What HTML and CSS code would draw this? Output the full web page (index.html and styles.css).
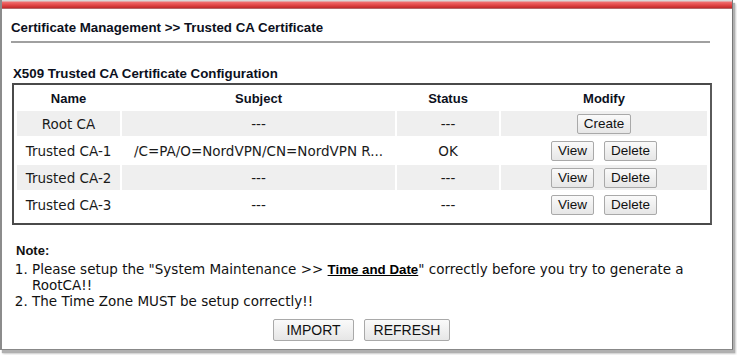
FILE: index.html
```html
<!DOCTYPE html>
<html lang="en">
<head>
  <meta charset="UTF-8">
  <title>Trusted CA Certificate</title>
  <link rel="stylesheet" href="styles.css">
</head>
<body>
  <div class="ventana">
    <div class="barra-roja"></div>
    <div class="contenido">
      <h1 class="titulo">Certificate Management &gt;&gt; Trusted CA Certificate</h1>

      <h2 class="subtitulo">X509 Trusted CA Certificate Configuration</h2>
      <div class="caja">
        <table class="tabla">
          <thead>
            <tr>
              <th class="c-nombre">Name</th>
              <th class="c-sujeto">Subject</th>
              <th class="c-estado">Status</th>
              <th class="c-modif">Modify</th>
            </tr>
          </thead>
          <tbody>
            <tr class="gris">
              <td>Root CA</td>
              <td>---</td>
              <td>---</td>
              <td><button class="boton">Create</button></td>
            </tr>
            <tr>
              <td>Trusted CA-1</td>
              <td>/C=PA/O=NordVPN/CN=NordVPN R...</td>
              <td>OK</td>
              <td><button class="boton">View</button><button class="boton">Delete</button></td>
            </tr>
            <tr class="gris">
              <td>Trusted CA-2</td>
              <td>---</td>
              <td>---</td>
              <td><button class="boton">View</button><button class="boton">Delete</button></td>
            </tr>
            <tr>
              <td>Trusted CA-3</td>
              <td>---</td>
              <td>---</td>
              <td><button class="boton">View</button><button class="boton">Delete</button></td>
            </tr>
          </tbody>
        </table>
      </div>

      <div class="nota">
        <div class="nota-titulo">Note:</div>
        <ol class="lista">
          <li>Please setup the "System Maintenance &gt;&gt; <a href="#">Time and Date</a>" correctly before you try to generate a RootCA!!</li>
          <li>The Time Zone MUST be setup correctly!!</li>
        </ol>
      </div>

      <div class="acciones">
        <button class="boton grande importar">IMPORT</button>
        <button class="boton grande refrescar">REFRESH</button>
      </div>
    </div>
  </div>
</body>
</html>
```

FILE: styles.css
```css
* {
  margin: 0;
  padding: 0;
  box-sizing: border-box;
}

html, body {
  width: 737px;
  height: 355px;
  overflow: hidden;
  background: white;
  font-family: "Liberation Sans", Arial, sans-serif;
  color: #000;
}

.ventana {
  width: 733px;
  height: 350px;
  border-left: 2px solid #8c8c8c;
  border-right: 1px solid #777;
  border-bottom: 1px solid #888;
  box-shadow: 2px 3px 1px #b0b0b0, 3px 4px 2px #d0d0d0;
  background: white;
}

.barra-roja {
  height: 9px;
  background: linear-gradient(#d9d9d9 0, #d9d9d9 1px, #f07070 2px, #e24848 5px, #c02a2a 8px, #a8a8a8 9px);
}

.contenido {
  padding: 0 22px 0 9px;
}

.titulo {
  font-size: 13.3px;
  font-weight: bold;
  color: #0c1020;
  padding: 11px 0 6px 0;
  border-bottom: 2px solid #a0a0a0;
}

.subtitulo {
  font-size: 13.3px;
  font-weight: bold;
  color: #0c1020;
  margin: 23px 0 2px 2px;
}

.caja {
  margin-left: 1px;
  width: 700px;
  border: 2px solid #4a4a4a;
  border-right-color: #5a5a5a;
  padding: 0 1px 4px 1px;
}

.tabla {
  width: 100%;
  border-collapse: separate;
  border-spacing: 2px 2px;
  font-family: "DejaVu Sans", Verdana, sans-serif;
  font-size: 13.5px;
  color: #1a1a1a;
}

.tabla th {
  font-family: "Liberation Sans", Arial, sans-serif;
  font-size: 13px;
  font-weight: bold;
  color: #0c1020;
  height: 22px;
  padding-top: 1px;
}

.c-nombre { width: 103px; }
.c-sujeto { width: 273px; }
.c-estado { width: 102px; }

.tabla td {
  height: 25px;
  text-align: center;
  white-space: nowrap;
}

.gris td {
  background: #efefef;
}

.boton {
  font-family: "Liberation Sans", Arial, sans-serif;
  font-size: 13.5px;
  color: #111;
  height: 20px;
  padding: 0 6px;
  background: linear-gradient(#fafafa, #e6e6e6);
  border: 1px solid #a9a9a9;
  border-radius: 2px;
  margin: 0 5px;
  vertical-align: middle;
  cursor: pointer;
}

.nota {
  margin: 18px 0 0 5px;
  font-family: "DejaVu Sans", Verdana, sans-serif;
  font-size: 13.5px;
  color: #111;
  line-height: 16px;
}

.nota-titulo {
  font-family: "Liberation Sans", Arial, sans-serif;
  font-weight: bold;
  font-size: 13px;
  line-height: 16px;
  margin-bottom: 2px;
}

.lista {
  padding-left: 16px;
}

.lista li {
  line-height: 16px;
}

.lista a {
  color: #000;
  font-weight: bold;
  font-family: "Liberation Sans", Arial, sans-serif;
  font-size: 13.3px;
  line-height: 1;
  text-decoration: underline;
}

.acciones {
  display: flex;
  justify-content: center;
  gap: 10px;
  margin-top: 10px;
  padding-left: 2px;
}

.grande {
  height: 22px;
  font-size: 14px;
  padding: 0;
  margin: 0;
}

.importar { width: 81px; }
.refrescar { width: 86px; }
```
